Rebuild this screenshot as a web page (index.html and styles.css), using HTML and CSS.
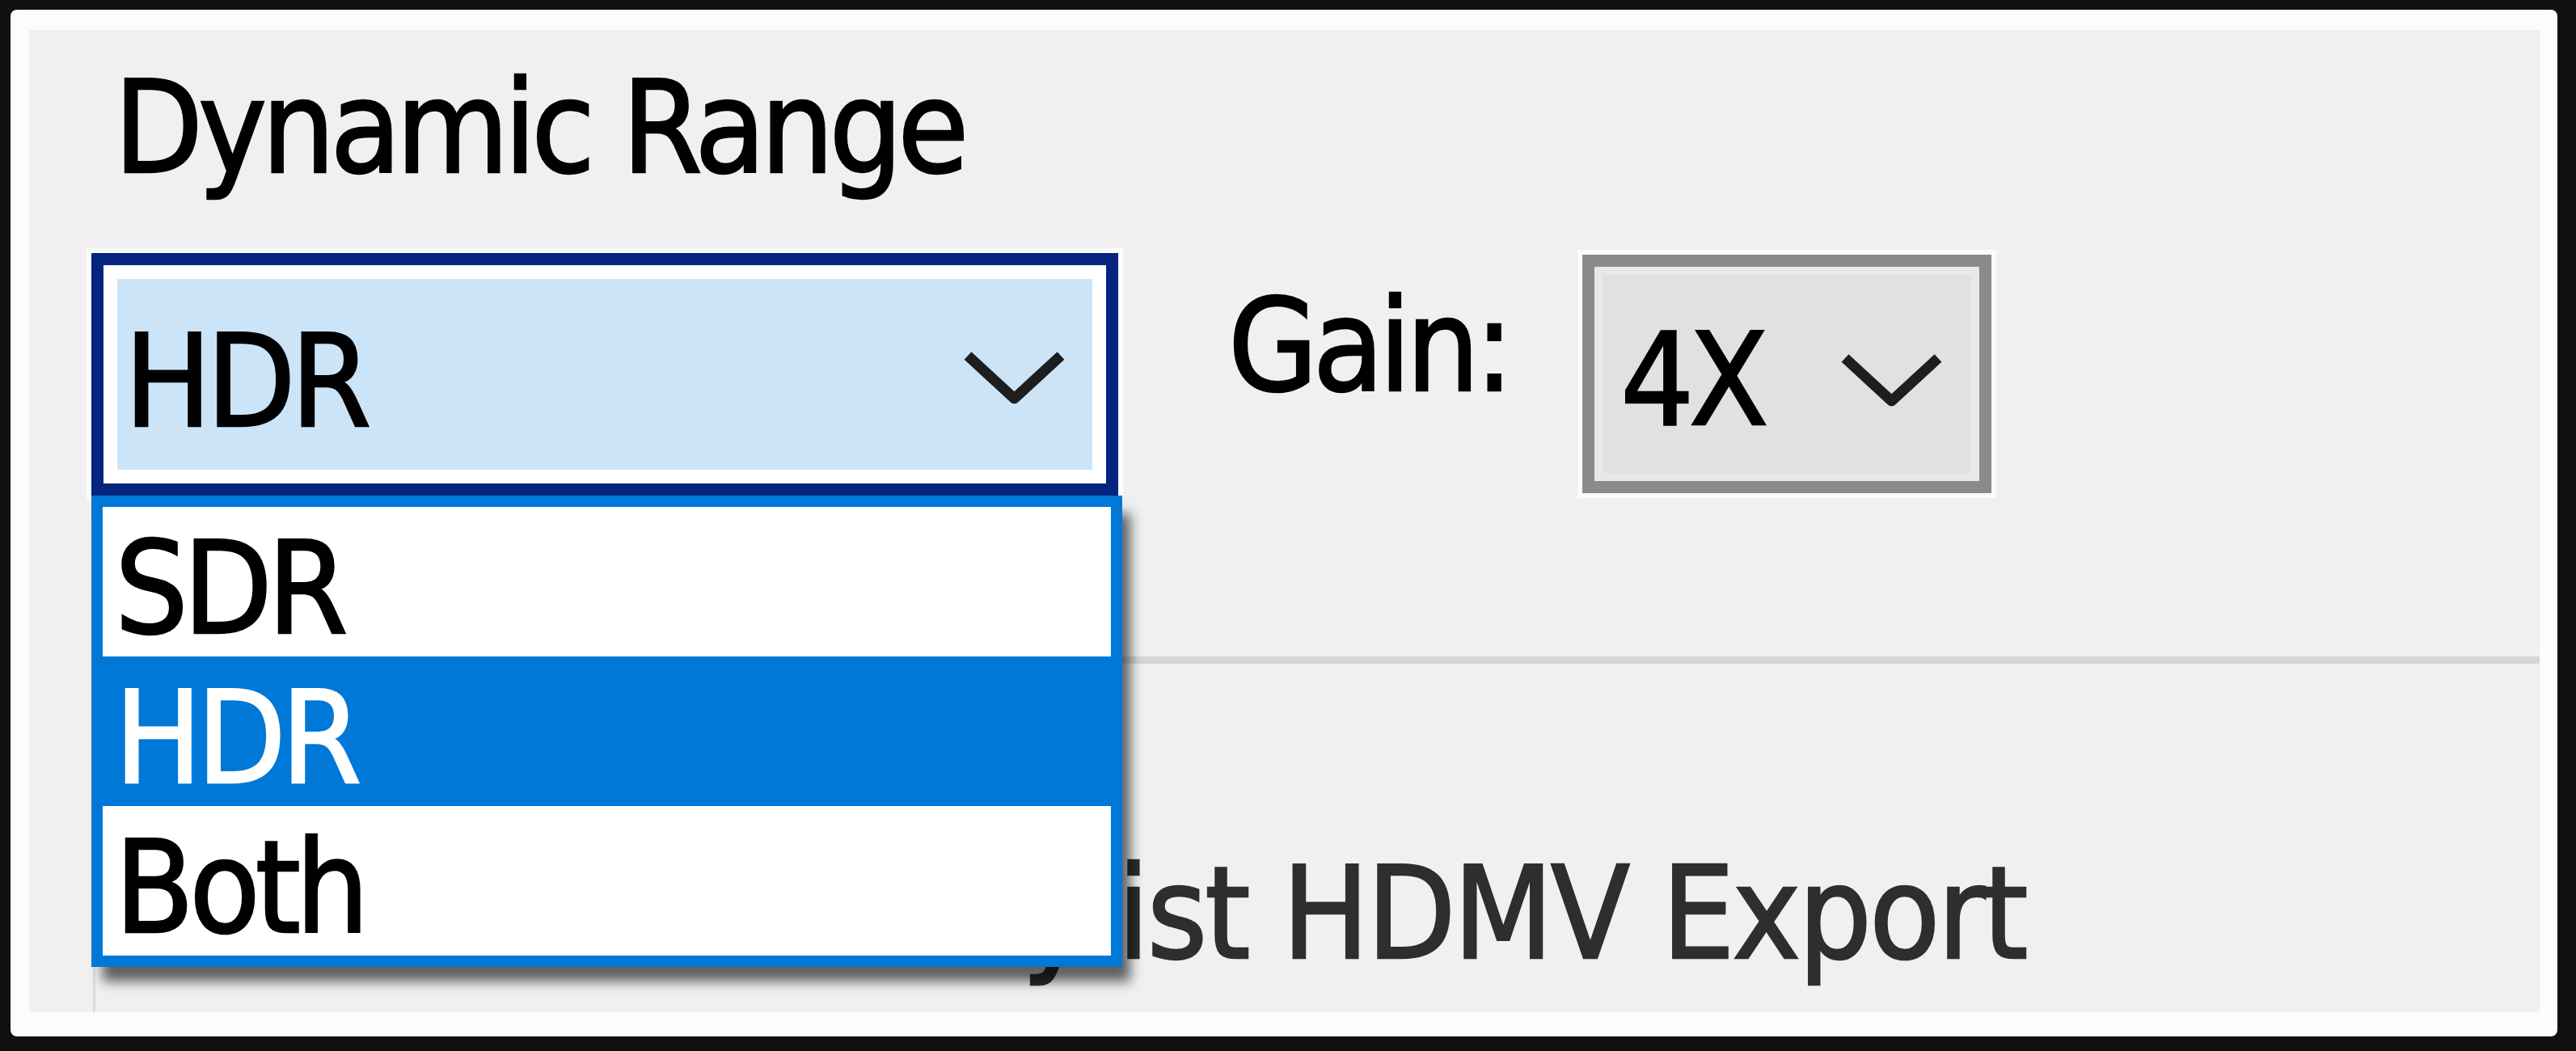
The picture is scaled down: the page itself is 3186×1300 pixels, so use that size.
FILE: index.html
```html
<!DOCTYPE html>
<html lang="en">
<head>
<meta charset="utf-8">
<title>Dynamic Range</title>
<link rel="stylesheet" href="styles.css">
</head>
<body>
  <div class="window">
    <div class="panel">
      <div class="heading">Dynamic Range</div>

      <div class="controls">
        <div class="combo combo--focused">
          <span class="combo__value">HDR</span>
          <svg class="chevron" viewBox="0 0 131 69" aria-hidden="true">
            <polyline points="8,8 65.5,61 123,8"/>
          </svg>
        </div>

        <span class="field-label">Gain:</span>

        <div class="combo combo--gain">
          <span class="combo__value">4X</span>
          <svg class="chevron chevron--gain" viewBox="0 0 131 69" aria-hidden="true">
            <polyline points="8,8 65.5,61 123,8"/>
          </svg>
        </div>
      </div>

      <div class="group">
        <div class="option">Playlist HDMV Export</div>
      </div>

      <ul class="dropdown">
        <li>SDR</li>
        <li class="is-selected">HDR</li>
        <li>Both</li>
      </ul>
    </div>
  </div>
</body>
</html>
```
FILE: styles.css
```css
html, body {
  margin: 0;
  height: 100%;
}

body {
  box-sizing: border-box;
  height: 1300px;
  padding: 12px 23px 18px 13px;
  background: #101010;
  overflow: hidden;
}

/* white window frame around the dialog surface */
.window {
  box-sizing: border-box;
  height: 100%;
  padding: 25px 22px 30px 23px;
  background: #fcfcfc;
  border-radius: 8px;
}

.panel {
  position: relative;
  box-sizing: border-box;
  height: 100%;
  padding: 41px 0 0 77px;
  background: #f0f0f0;
  overflow: hidden;
  font-family: "DejaVu Sans Condensed", "DejaVu Sans", sans-serif;
  font-stretch: condensed;
  font-size: 159px;
  line-height: 159px;
  letter-spacing: -6px;
  color: #000;
  -webkit-text-stroke: 2.5px currentColor;
}

.heading {
  margin-left: 28px;
}

.controls {
  display: flex;
  align-items: flex-start;
  margin-top: 76px;
}

/* drop-down combo boxes */
.combo {
  box-sizing: border-box;
  display: flex;
  justify-content: space-between;
  align-items: flex-start;
  flex: none;
  border: 15px solid;
}

.combo--focused {
  width: 1270px;
  height: 300px;
  padding: 64px 48px 0 26px;
  border-color: #04247f;
  background: #cce4f7;
  box-shadow: inset 0 0 0 17px #fff, 0 0 0 6px rgba(255, 255, 255, 0.7);
}

.combo--gain {
  width: 506px;
  height: 295px;
  margin: 2px 0 0 91px;
  padding: 60px 43px 0 32px;
  border-color: #8b8b8b;
  background: #e1e1e1;
  box-shadow: inset 0 0 0 10px #e8e8e8, 0 0 0 6px rgba(255, 255, 255, 0.7);
}

.chevron {
  flex: none;
  width: 131px;
  height: 69px;
  margin-top: 40px;
}

.chevron--gain {
  margin-top: 45px;
}

.chevron polyline {
  fill: none;
  stroke: #1e1e1e;
  stroke-width: 13;
  stroke-linejoin: round;
}

.field-label {
  flex: none;
  margin: 35px 0 0 136px;
}

/* group frame below the controls */
.group {
  height: 600px;
  margin: 199px 0 0 2px;
  border-top: 9px solid #d5d5d5;
  border-left: 3px solid #dcdcdc;
}

.option {
  margin: 229px 0 0 941px;
  letter-spacing: -3px;
  color: #2e2e2e;
  white-space: nowrap;
}

/* open list of the Dynamic Range combo */
.dropdown {
  position: absolute;
  left: 77px;
  top: 576px;
  box-sizing: border-box;
  width: 1275px;
  margin: 0;
  padding: 0;
  list-style: none;
  border: 14px solid #0078d7;
  background: #fff;
  box-shadow: 12px 20px 14px -2px rgba(0, 0, 0, 0.6);
}

.dropdown li {
  box-sizing: border-box;
  height: 185px;
  padding: 21px 0 0 15px;
  line-height: 159px;
}

.dropdown li.is-selected {
  background: #0078d7;
  color: #fff;
}
```
